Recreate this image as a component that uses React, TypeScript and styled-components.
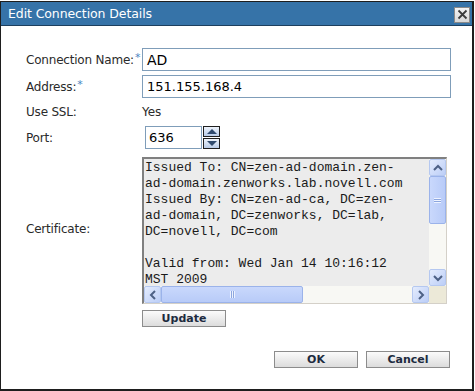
import React from 'react';
import styled, { createGlobalStyle } from 'styled-components';

const GlobalStyle = createGlobalStyle`
  body {
    margin: 0;
    background: #ffffff;
    font-family: 'DejaVu Sans', Verdana, sans-serif;
  }
`;

const certLines = [
  'Issued To: CN=zen-ad-domain.zen-',
  'ad-domain.zenworks.lab.novell.com',
  'Issued By: CN=zen-ad-ca, DC=zen-',
  'ad-domain, DC=zenworks, DC=lab,',
  'DC=novell, DC=com',
  '',
  'Valid from: Wed Jan 14 10:16:12',
  'MST 2009',
];

const Arrow = ({ dir }: { dir: 'up' | 'down' | 'left' | 'right' }) => {
  const paths = {
    up: 'M3 9 L7 5 L11 9',
    down: 'M3 5 L7 9 L11 5',
    left: 'M9 3 L5 7 L9 11',
    right: 'M5 3 L9 7 L5 11',
  };
  return (
    <svg width="14" height="14" viewBox="0 0 14 14">
      <path d={paths[dir]} fill="none" stroke="#4d6185" strokeWidth="2" />
    </svg>
  );
};

const App = () => {
  return (
    <>
      <GlobalStyle />
      <St.Dialog>
        <St.TitleBar>
          <St.Title>Edit Connection Details</St.Title>
          <St.CloseButton>
            <svg width="11" height="11" viewBox="0 0 11 11">
              <path d="M1.5 1.5 L9.5 9.5 M9.5 1.5 L1.5 9.5" stroke="#3c3c3c" strokeWidth="1.8" />
            </svg>
          </St.CloseButton>
        </St.TitleBar>

        <St.Body>
          <St.Form>
            <St.Label>
              Connection Name:<St.Required>*</St.Required>
            </St.Label>
            <St.TextInput $size={14}>AD</St.TextInput>

            <St.Label>
              Address:<St.Required>*</St.Required>
            </St.Label>
            <St.TextInput $size={13}>151.155.168.4</St.TextInput>

            <St.Label>Use SSL:</St.Label>
            <St.Value>Yes</St.Value>

            <St.Label>Port:</St.Label>
            <St.PortRow>
              <St.PortInput>636</St.PortInput>
              <St.Spinner>
                <St.SpinButton>
                  <svg width="12" height="7" viewBox="0 0 12 7">
                    <path d="M1 6 L6 1 L11 6 Z" fill="#2f4a6e" />
                  </svg>
                </St.SpinButton>
                <St.SpinButton>
                  <svg width="12" height="7" viewBox="0 0 12 7">
                    <path d="M1 1 L6 6 L11 1 Z" fill="#2f4a6e" />
                  </svg>
                </St.SpinButton>
              </St.Spinner>
            </St.PortRow>

            <St.Label $center>Certificate:</St.Label>
            <St.CertBox>
              <St.CertText>
                {certLines.map((line, i) => (
                  <St.CertLine key={i}>{line || '\u00a0'}</St.CertLine>
                ))}
              </St.CertText>
              <St.VScroll>
                <St.ScrollButton>
                  <Arrow dir="up" />
                </St.ScrollButton>
                <St.VThumb>
                  <St.Grip $vertical />
                </St.VThumb>
                <St.Track />
                <St.ScrollButton>
                  <Arrow dir="down" />
                </St.ScrollButton>
              </St.VScroll>
              <St.HScroll>
                <St.ScrollButton>
                  <Arrow dir="left" />
                </St.ScrollButton>
                <St.HThumb>
                  <St.Grip />
                </St.HThumb>
                <St.Track />
                <St.ScrollButton>
                  <Arrow dir="right" />
                </St.ScrollButton>
              </St.HScroll>
              <St.Corner />
            </St.CertBox>

            <span />
            <St.UpdateRow>
              <St.Button>Update</St.Button>
            </St.UpdateRow>
          </St.Form>

          <St.Footer>
            <St.Button>OK</St.Button>
            <St.Button>Cancel</St.Button>
          </St.Footer>
        </St.Body>
      </St.Dialog>
    </>
  );
};

export default App;

const St = {
  Dialog: styled.div`
    box-sizing: border-box;
    width: 474px;
    height: 390px;
    margin-top: 1px;
    border-left: 1px solid #1e1e1e;
    border-top: 1px solid #1e1e1e;
    border-right: 2px solid #1e1e1e;
    border-bottom: 2px solid #1e1e1e;
    background: #ffffff;
    display: flex;
    flex-direction: column;
  `,

  TitleBar: styled.div`
    height: 23px;
    background: #3673a8;
    border-bottom: 1px solid #1d3f5e;
    display: flex;
    align-items: center;
    justify-content: space-between;
    padding: 0 2px 0 7px;
  `,

  Title: styled.div`
    color: #ffffff;
    font-family: 'DejaVu Sans', sans-serif;
    font-size: 12.5px;
    letter-spacing: -0.1px;
  `,

  CloseButton: styled.div`
    width: 14px;
    height: 14px;
    margin-top: 2px;
    background: linear-gradient(#f4f4f4, #d8d8d8);
    border: 1px solid #8a8a8a;
    display: flex;
    align-items: center;
    justify-content: center;
  `,

  Body: styled.div`
    flex: 1;
    padding: 22px 0 0 25px;
    display: flex;
    flex-direction: column;
  `,

  Form: styled.div`
    display: grid;
    grid-template-columns: 116px 309px;
    row-gap: 4px;
  `,

  Label: styled.div<{ $center?: boolean }>`
    display: flex;
    align-items: center;
    align-self: ${({ $center }) => ($center ? 'center' : 'stretch')};
    font-size: 12px;
    color: #2a2a2a;
    letter-spacing: -0.2px;
  `,

  Required: styled.span`
    color: #4a86c2;
    font-size: 11px;
    align-self: flex-start;
    margin-top: 3px;
    margin-left: 1px;
  `,

  TextInput: styled.div<{ $size: number }>`
    box-sizing: border-box;
    height: 23px;
    border: 1px solid #7f9db9;
    padding: 0 4px;
    display: flex;
    align-items: center;
    font-family: 'DejaVu Sans', sans-serif;
    font-size: ${({ $size }) => $size}px;
    color: #000000;
  `,

  Value: styled.div`
    height: 20px;
    display: flex;
    align-items: center;
    font-size: 12px;
    color: #2a2a2a;
  `,

  PortRow: styled.div`
    display: flex;
    align-items: center;
    gap: 1px;
    padding-left: 3px;
  `,

  PortInput: styled.div`
    box-sizing: border-box;
    width: 57px;
    height: 23px;
    border: 1px solid #7f9db9;
    padding: 0 3px;
    display: flex;
    align-items: center;
    font-size: 13px;
    color: #000000;
  `,

  Spinner: styled.div`
    display: flex;
    flex-direction: column;
    gap: 1px;
  `,

  SpinButton: styled.div`
    box-sizing: border-box;
    width: 17px;
    height: 11px;
    border: 1px solid #1f1f1f;
    background: linear-gradient(#eef3fb, #b9cce8);
    display: flex;
    align-items: center;
    justify-content: center;
  `,

  CertBox: styled.div`
    box-sizing: border-box;
    width: 305px;
    height: 147px;
    margin-top: 4px;
    border-top: 2px solid #808080;
    border-left: 2px solid #808080;
    border-right: 1px solid #d4d0c8;
    border-bottom: 1px solid #d4d0c8;
    background: #ececec;
    display: grid;
    grid-template-columns: 1fr 17px;
    grid-template-rows: 1fr 17px;
  `,

  CertText: styled.div`
    overflow: hidden;
    padding: 1px 0 0 1px;
    font-family: 'Liberation Mono', 'Courier New', monospace;
    font-size: 13px;
    line-height: 16px;
    color: #1a1a1a;
  `,

  CertLine: styled.div`
    white-space: pre;
  `,

  VScroll: styled.div`
    display: flex;
    flex-direction: column;
    background: #f8f8f4;
  `,

  HScroll: styled.div`
    display: flex;
    background: #f8f8f4;
  `,

  ScrollButton: styled.div`
    box-sizing: border-box;
    width: 17px;
    height: 17px;
    flex: none;
    border: 1px solid #b5c8f0;
    border-radius: 2px;
    background: linear-gradient(135deg, #e4ecfd, #bccef7);
    display: flex;
    align-items: center;
    justify-content: center;
  `,

  VThumb: styled.div`
    box-sizing: border-box;
    height: 48px;
    flex: none;
    border: 1px solid #9bb3ea;
    border-radius: 2px;
    background: linear-gradient(90deg, #c9d8fc, #b8cbf8);
    display: flex;
    align-items: center;
    justify-content: center;
  `,

  HThumb: styled.div`
    box-sizing: border-box;
    width: 142px;
    flex: none;
    border: 1px solid #9bb3ea;
    border-radius: 2px;
    background: linear-gradient(#c9d8fc, #b8cbf8);
    display: flex;
    align-items: center;
    justify-content: center;
  `,

  Grip: styled.div<{ $vertical?: boolean }>`
    width: ${({ $vertical }) => ($vertical ? '7px' : '5px')};
    height: ${({ $vertical }) => ($vertical ? '5px' : '7px')};
    background: ${({ $vertical }) =>
      $vertical
        ? 'repeating-linear-gradient(#eef3ff 0 1px, #8ca6de 1px 2px)'
        : 'repeating-linear-gradient(90deg, #eef3ff 0 1px, #8ca6de 1px 2px)'};
  `,

  Track: styled.div`
    flex: 1;
  `,

  Corner: styled.div`
    background: #ece9d8;
  `,

  UpdateRow: styled.div`
    padding-top: 2px;
  `,

  Button: styled.div`
    box-sizing: border-box;
    width: 84px;
    height: 17px;
    border: 1px solid #8c8c8c;
    background: linear-gradient(#fbfbfb, #dcdcdc);
    display: flex;
    align-items: center;
    justify-content: center;
    font-family: 'DejaVu Sans', sans-serif;
    font-weight: bold;
    font-size: 11px;
    color: #1d2b3f;
  `,

  Footer: styled.div`
    display: flex;
    justify-content: flex-end;
    gap: 8px;
    margin-top: 24px;
    padding-right: 22px;
  `,
};
